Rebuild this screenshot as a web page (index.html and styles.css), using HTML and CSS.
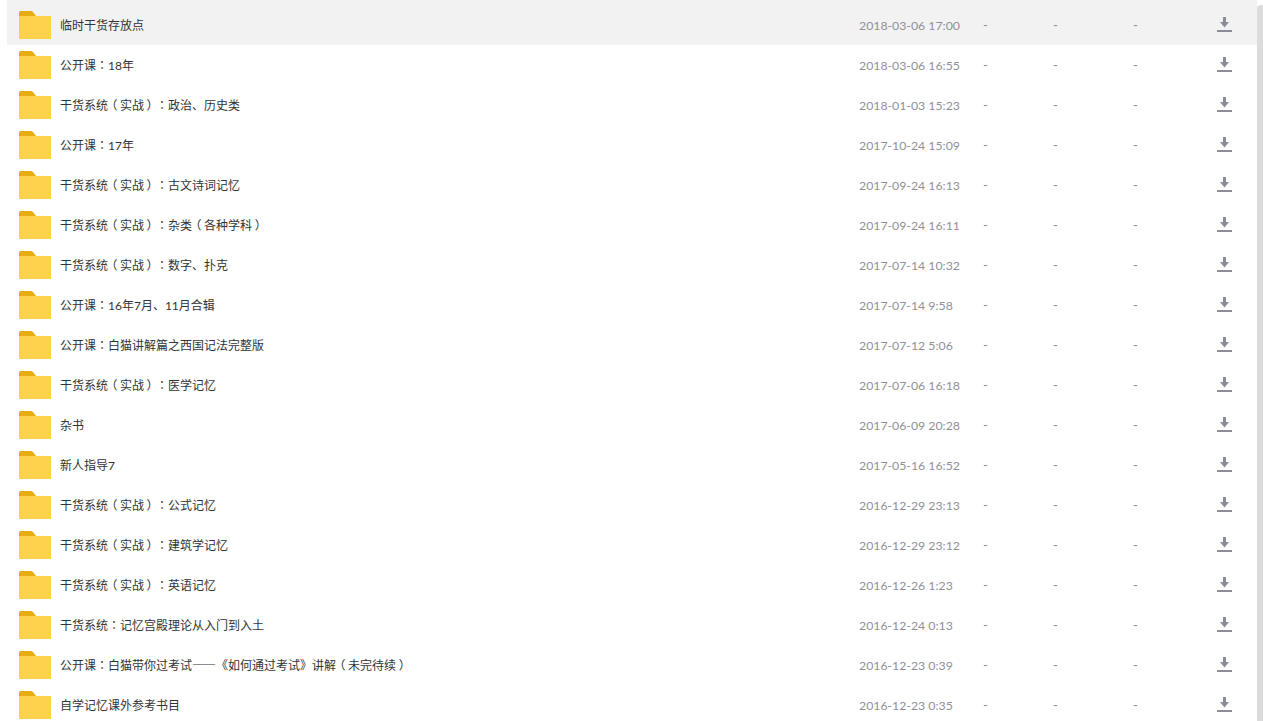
FILE: index.html
```html
<!DOCTYPE html>
<html lang="zh-CN">
<head>
<meta charset="utf-8">
<title>文件列表</title>
<link rel="stylesheet" href="styles.css">
</head>
<body>
<svg class="defs" width="0" height="0" aria-hidden="true">
  <symbol id="folder" viewBox="0 0 32 28">
    <path fill="#e5ae0e" d="M0 1.5Q0 0 1.500 0H11.500Q13 0 14 1L17 5H0Z"/>
    <path fill="#ffd24d" d="M0 5H32V28H0Z"/>
  </symbol>
  <symbol id="dl" viewBox="0 0 15 15">
    <path fill="#8a8d96" d="M6 0H9V5H12L7.500 10.500 3 5H6Z"/>
    <path fill="#8a8d96" d="M0 13H15V15H0Z"/>
  </symbol>
</svg>
<main class="list">
  <div class="row active"><svg class="folder"><use href="#folder"/></svg><span class="name">临时干货存放点</span><span class="date">2018-03-06 17:00</span><span class="c1">-</span><span class="c2">-</span><span class="c3">-</span><svg class="dl"><use href="#dl"/></svg></div>
  <div class="row"><svg class="folder"><use href="#folder"/></svg><span class="name">公开课<span class="p" lang="zh-Hant">：</span>18年</span><span class="date">2018-03-06 16:55</span><span class="c1">-</span><span class="c2">-</span><span class="c3">-</span><svg class="dl"><use href="#dl"/></svg></div>
  <div class="row"><svg class="folder"><use href="#folder"/></svg><span class="name">干货系统<span class="br">（</span>实战<span class="br">）</span><span class="p" lang="zh-Hant">：</span>政治、历史类</span><span class="date">2018-01-03 15:23</span><span class="c1">-</span><span class="c2">-</span><span class="c3">-</span><svg class="dl"><use href="#dl"/></svg></div>
  <div class="row"><svg class="folder"><use href="#folder"/></svg><span class="name">公开课<span class="p" lang="zh-Hant">：</span>17年</span><span class="date">2017-10-24 15:09</span><span class="c1">-</span><span class="c2">-</span><span class="c3">-</span><svg class="dl"><use href="#dl"/></svg></div>
  <div class="row"><svg class="folder"><use href="#folder"/></svg><span class="name">干货系统<span class="br">（</span>实战<span class="br">）</span><span class="p" lang="zh-Hant">：</span>古文诗词记忆</span><span class="date">2017-09-24 16:13</span><span class="c1">-</span><span class="c2">-</span><span class="c3">-</span><svg class="dl"><use href="#dl"/></svg></div>
  <div class="row"><svg class="folder"><use href="#folder"/></svg><span class="name">干货系统<span class="br">（</span>实战<span class="br">）</span><span class="p" lang="zh-Hant">：</span>杂类<span class="br">（</span>各种学科<span class="br">）</span></span><span class="date">2017-09-24 16:11</span><span class="c1">-</span><span class="c2">-</span><span class="c3">-</span><svg class="dl"><use href="#dl"/></svg></div>
  <div class="row"><svg class="folder"><use href="#folder"/></svg><span class="name">干货系统<span class="br">（</span>实战<span class="br">）</span><span class="p" lang="zh-Hant">：</span>数字、扑克</span><span class="date">2017-07-14 10:32</span><span class="c1">-</span><span class="c2">-</span><span class="c3">-</span><svg class="dl"><use href="#dl"/></svg></div>
  <div class="row"><svg class="folder"><use href="#folder"/></svg><span class="name">公开课<span class="p" lang="zh-Hant">：</span>16年7月、11月合辑</span><span class="date">2017-07-14 9:58</span><span class="c1">-</span><span class="c2">-</span><span class="c3">-</span><svg class="dl"><use href="#dl"/></svg></div>
  <div class="row"><svg class="folder"><use href="#folder"/></svg><span class="name">公开课<span class="p" lang="zh-Hant">：</span>白猫讲解篇之西国记法完整版</span><span class="date">2017-07-12 5:06</span><span class="c1">-</span><span class="c2">-</span><span class="c3">-</span><svg class="dl"><use href="#dl"/></svg></div>
  <div class="row"><svg class="folder"><use href="#folder"/></svg><span class="name">干货系统<span class="br">（</span>实战<span class="br">）</span><span class="p" lang="zh-Hant">：</span>医学记忆</span><span class="date">2017-07-06 16:18</span><span class="c1">-</span><span class="c2">-</span><span class="c3">-</span><svg class="dl"><use href="#dl"/></svg></div>
  <div class="row"><svg class="folder"><use href="#folder"/></svg><span class="name">杂书</span><span class="date">2017-06-09 20:28</span><span class="c1">-</span><span class="c2">-</span><span class="c3">-</span><svg class="dl"><use href="#dl"/></svg></div>
  <div class="row"><svg class="folder"><use href="#folder"/></svg><span class="name">新人指导7</span><span class="date">2017-05-16 16:52</span><span class="c1">-</span><span class="c2">-</span><span class="c3">-</span><svg class="dl"><use href="#dl"/></svg></div>
  <div class="row"><svg class="folder"><use href="#folder"/></svg><span class="name">干货系统<span class="br">（</span>实战<span class="br">）</span><span class="p" lang="zh-Hant">：</span>公式记忆</span><span class="date">2016-12-29 23:13</span><span class="c1">-</span><span class="c2">-</span><span class="c3">-</span><svg class="dl"><use href="#dl"/></svg></div>
  <div class="row"><svg class="folder"><use href="#folder"/></svg><span class="name">干货系统<span class="br">（</span>实战<span class="br">）</span><span class="p" lang="zh-Hant">：</span>建筑学记忆</span><span class="date">2016-12-29 23:12</span><span class="c1">-</span><span class="c2">-</span><span class="c3">-</span><svg class="dl"><use href="#dl"/></svg></div>
  <div class="row"><svg class="folder"><use href="#folder"/></svg><span class="name">干货系统<span class="br">（</span>实战<span class="br">）</span><span class="p" lang="zh-Hant">：</span>英语记忆</span><span class="date">2016-12-26 1:23</span><span class="c1">-</span><span class="c2">-</span><span class="c3">-</span><svg class="dl"><use href="#dl"/></svg></div>
  <div class="row"><svg class="folder"><use href="#folder"/></svg><span class="name">干货系统<span class="p" lang="zh-Hant">：</span>记忆宫殿理论从入门到入土</span><span class="date">2016-12-24 0:13</span><span class="c1">-</span><span class="c2">-</span><span class="c3">-</span><svg class="dl"><use href="#dl"/></svg></div>
  <div class="row"><svg class="folder"><use href="#folder"/></svg><span class="name">公开课<span class="p" lang="zh-Hant">：</span>白猫带你过考试<span class="p">——</span>《如何通过考试》讲解<span class="br">（</span>未完待续<span class="br">）</span></span><span class="date">2016-12-23 0:39</span><span class="c1">-</span><span class="c2">-</span><span class="c3">-</span><svg class="dl"><use href="#dl"/></svg></div>
  <div class="row"><svg class="folder"><use href="#folder"/></svg><span class="name">自学记忆课外参考书目</span><span class="date">2016-12-23 0:35</span><span class="c1">-</span><span class="c2">-</span><span class="c3">-</span><svg class="dl"><use href="#dl"/></svg></div>
</main>
<div class="scrollbar"></div>
</body>
</html>
```
FILE: styles.css
```css
html, body { margin: 0; padding: 0; height: 721px; overflow: hidden; background: #fff; }
body { font-family: "Lato", "Noto Sans CJK SC", sans-serif; font-size: 12px; position: relative; }
.defs { position: absolute; }
.list { padding: 0 6px 0 7px; display: flex; flex-direction: column; }
.row { height: 40px; box-sizing: content-box; flex: none; display: grid; grid-template-columns: 41px 799px 123px 70px 80px 1fr 15px; align-items: center; padding: 0 25px 0 12px; color: #333; }
.row.active { background: #f2f2f2; padding-top: 5px; }
.folder { width: 32px; height: 28px; display: block; }
.name { color: #333; white-space: nowrap; margin-top: -2px; font-kerning: none; text-spacing-trim: space-all; }
.p { font-family: "Noto Sans CJK TC", sans-serif; }
.br { display: inline-block; width: 12px; text-align: center; font-family: "Noto Sans CJK SC", sans-serif; font-feature-settings: "palt"; }
.date { color: #8f9099; font-size: 12.3px; }
.c1, .c2, .c3 { color: #8f9099; font-size: 13px; margin-left: 1px; }
.dl { width: 15px; height: 15px; display: block; margin-top: -1px; }
.scrollbar { position: absolute; top: 5px; right: 0; width: 6px; height: 716px; background: #dcdcdc; border-radius: 4px 0 0 0; }
```
